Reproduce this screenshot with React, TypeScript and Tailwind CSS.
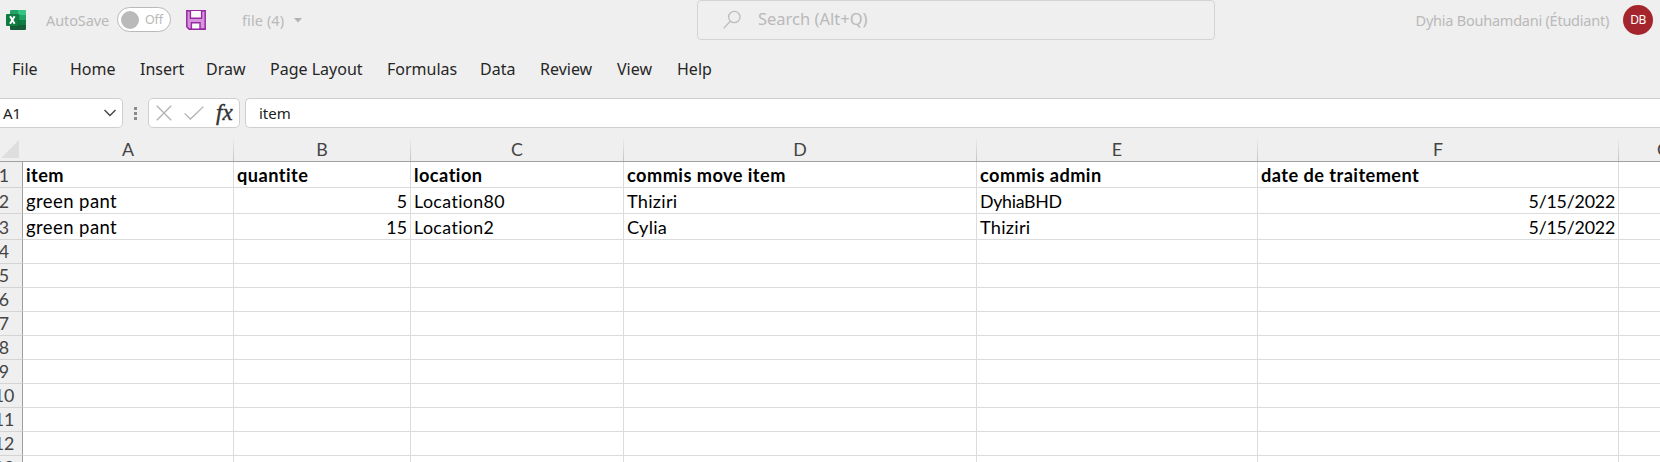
const tabs = ['File', 'Home', 'Insert', 'Draw', 'Page Layout', 'Formulas', 'Data', 'Review', 'View', 'Help'];

const gridCols = 'grid grid-rows-1 grid-cols-[23px_211px_177px_213px_353px_281px_361px_41px]';

const columns = ['A', 'B', 'C', 'D', 'E', 'F'];

const rows: string[][] = [
  ['item', 'quantite', 'location', 'commis move item', 'commis admin', 'date de traitement'],
  ['green pant', '5', 'Location80', 'Thiziri', 'DyhiaBHD', '5/15/2022'],
  ['green pant', '15', 'Location2', 'Cylia', 'Thiziri', '5/15/2022'],
  ...Array.from({ length: 10 }, () => ['', '', '', '', '', '']),
];

function cellText(value: string, row: number, col: number) {
  if (row === 0) return 'font-bold text-[18.2px] tracking-[0.45px]';
  if (col === 0) return 'text-[18.5px] tracking-[0.42px]';
  if (col === 1) return 'text-right';
  if (col === 2) return 'tracking-[0.4px]';
  if (col === 5) return 'text-right tracking-[-0.2px]';
  return value === 'DyhiaBHD' ? 'tracking-[-0.3px]' : 'text-[18.2px] tracking-[0.25px]';
}

function ExcelLogo() {
  return (
    <svg width="20" height="20" viewBox="0 0 20 20">
      <path d="M5 0h7.5v5H4V1a1 1 0 0 1 1-1z" fill="#21a366" />
      <path d="M12 0h7a1 1 0 0 1 1 1v4h-8z" fill="#33c481" />
      <path d="M4 5h8v5H4z" fill="#107c41" />
      <path d="M12 5h8v5h-8z" fill="#21a366" />
      <path d="M4 10h8v5H4z" fill="#185c37" />
      <path d="M12 10h8v5h-8z" fill="#107c41" />
      <path d="M4 15h16v4a1 1 0 0 1-1 1H5a1 1 0 0 1-1-1z" fill="#185c37" />
      <path d="M12 4h1.300v13H4v-1h8z" fill="#0b5a2e" opacity=".6" />
      <rect x="0" y="4" width="12.500" height="12" rx="1" fill="#107c41" />
      <path d="M4.100 6.200L8.600 13.800M8.600 6.200L4.100 13.800" stroke="#fff" strokeWidth="2" />
    </svg>
  );
}

function SaveIcon() {
  return (
    <svg width="20" height="20" viewBox="0 0 20 20">
      <path d="M.8.8h18.4v18.4H3.2L.8 16.8z" fill="#d992dc" stroke="#962aa3" strokeWidth="1.5" />
      <path d="M4.4 1v7.200h11.200V1" fill="#fafafa" stroke="#962aa3" strokeWidth="1.4" />
      <path d="M5.400 19v-6.2h8.6V19" fill="#fafafa" stroke="#962aa3" strokeWidth="1.4" />
      <path d="M3.200 19.200h16" stroke="#962aa3" strokeWidth="1.5" />
    </svg>
  );
}

function TitleBar() {
  return (
    <div className="flex h-10 items-start text-[#b9b9b9]">
      <div className="mt-[10px] ml-[6px] w-10"><ExcelLogo /></div>
      <div className="mt-[10px] w-[71px] text-[14.5px] leading-5 tracking-[-0.1px]">AutoSave</div>
      <div className="mt-[7px] flex h-[25px] w-[54px] items-center rounded-full border border-[#b9b9b9] bg-white pl-[3px]">
        <div className="size-[18px] rounded-full bg-[#bababa]" />
        <div className="ml-[6px] text-[12.5px] leading-4 tracking-[-0.2px]">Off</div>
      </div>
      <div className="mt-[10px] ml-[15px] w-[56px]"><SaveIcon /></div>
      <div className="mt-[10px] w-[52px] text-[14.5px] leading-5 tracking-[0.1px] whitespace-nowrap">file (4)</div>
      <svg className="mt-[18px]" width="8" height="5" viewBox="0 0 8 5"><path d="M0 0h8L4 4.5z" fill="#b3b3b3" /></svg>
      <div className="ml-[395px] flex h-10 w-[518px] items-start rounded border border-[#d4d4d4]">
        <svg className="mt-[9px] ml-[25px]" width="20" height="20" viewBox="0 0 20 20" fill="none" stroke="#bdbdbd" strokeWidth="1.3">
          <circle cx="11.3" cy="7" r="5.7" />
          <path d="M7.2 11.2L.8 18.4" />
        </svg>
        <div className="mt-[8px] ml-[15px] text-[16.500px] leading-5">Search (Alt+Q)</div>
      </div>
      <div className="mt-[10px] ml-auto text-[14.5px] leading-5 tracking-[-0.24px] whitespace-nowrap">Dyhia Bouhamdani (Étudiant)</div>
      <div className="mt-[5px] mr-[7px] ml-[14px] flex size-[30px] items-center justify-center rounded-full bg-[#a4262c] text-[12px] tracking-[-0.5px] text-white">DB</div>
    </div>
  );
}

function FormulaBar() {
  return (
    <div className="flex h-[30px] items-stretch text-[15px] text-[#222]">
      <div className="flex w-[123px] items-center justify-between rounded-r-[5px] border border-l-0 border-[#cfcfcf] bg-white pr-[6px] pl-[3px]">
        <span>A1</span>
        <svg width="12" height="8" viewBox="0 0 12 8" fill="none" stroke="#444" strokeWidth="1.4"><path d="M.5 1L6 6.5 11.500 1" /></svg>
      </div>
      <div className="flex w-[25px] flex-col items-center justify-center gap-[2px]">
        <div className="size-[3px] bg-[#8a8a8a]" />
        <div className="size-[3px] bg-[#8a8a8a]" />
        <div className="size-[3px] bg-[#8a8a8a]" />
      </div>
      <div className="flex w-[92px] items-center rounded-[5px] border border-[#cfcfcf] bg-white pl-[7px]">
        <svg width="16" height="16" viewBox="0 0 16 16" stroke="#b1b1b1" strokeWidth="1.3"><path d="M.8.8l14.400 14.400M15.200.8L.8 15.200" /></svg>
        <svg className="ml-3" width="20" height="14" viewBox="0 0 20 14" fill="none" stroke="#b1b1b1" strokeWidth="1.3"><path d="M.6 7.400L6.400 13 19.400.6" /></svg>
        <span className="ml-[12px] pb-px font-['Liberation_Serif',serif] text-[23px] leading-none text-[#333] italic [-webkit-text-stroke:0.4px_#333]">fx</span>
      </div>
      <div className="ml-[5px] flex flex-1 items-center rounded-l-[5px] border border-r-0 border-[#cfcfcf] bg-white pl-[13px]">item</div>
    </div>
  );
}

function Sheet() {
  return (
    <div className="bg-white font-['Lato',sans-serif] text-[17.8px] text-black [font-variant-ligatures:none]">
      <div className={`${gridCols} h-[25px] border-b border-[#a0a0a0] bg-[#efefef] text-[#444]`}>
        <div className="flex items-end justify-end pr-1 pb-[3px]">
          <svg width="18" height="18" viewBox="0 0 18 18"><path d="M18 0v18H0z" fill="#dedede" /></svg>
        </div>
        {columns.map((c) => (
          <div key={c} className="flex">
            <div className="flex-1 text-center leading-[24px]">{c}</div>
            <div className="w-px bg-linear-to-b from-[#efefef] to-[#c4c4c4]" />
          </div>
        ))}
        <div className="pl-[38px] leading-[24px]">G</div>
      </div>
      {rows.map((row, r) => (
        <div key={r} className={`${gridCols} ${r < 3 ? 'h-[26px] leading-[26px]' : 'h-6 leading-[23px]'}`}>
          <div className="flex justify-center border-r border-b border-r-[#a0a0a0] border-b-[#d4d4d4] bg-[#efefef] pr-[14px] whitespace-nowrap text-[#444]">{r + 1}</div>
          {row.map((v, c) => (
            <div key={c} className={`border-r border-b border-[#dcdcdc] pr-[3px] pl-[3px] whitespace-nowrap ${cellText(v, r, c)}`}>{v}</div>
          ))}
          <div className="border-b border-[#dcdcdc]" />
        </div>
      ))}
    </div>
  );
}

export default function App() {
  return (
    <div className="h-[462px] w-[1660px] overflow-hidden bg-white font-['Noto_Sans',sans-serif]">
      <div className="h-[128px] bg-[#efefef]">
        <TitleBar />
        <div className="grid h-[58px] grid-cols-[58px_70px_66px_64px_117px_93px_60px_77px_60px_60px] pl-3 text-[16px] leading-[58px] text-[#262626]">
          {tabs.map((label) => (
            <div key={label} className="h-[58px] whitespace-nowrap">{label}</div>
          ))}
        </div>
        <FormulaBar />
      </div>
      <div className="bg-[#efefef] pt-[9px]"><Sheet /></div>
    </div>
  );
}
